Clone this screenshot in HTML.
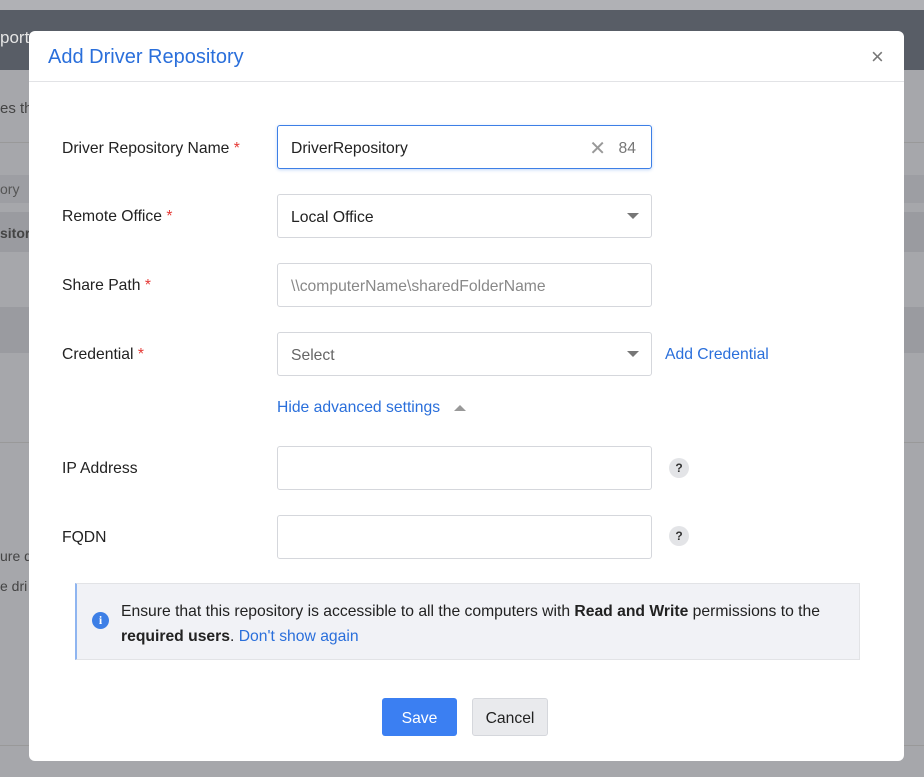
<!DOCTYPE html>
<html><head><meta charset="utf-8"><style>
*{box-sizing:border-box;margin:0;padding:0}
body{width:924px;height:777px;overflow:hidden;background:#a6a7ab;font-family:"Liberation Sans",sans-serif;position:relative;font-size:15.7px;color:#222}
.abs{position:absolute}
.modal{position:absolute;left:29px;top:31px;width:875px;height:730px;background:#fff;border-radius:6px}
.lbl{position:absolute;left:33px;font-size:15.7px;color:#222}
.req{color:#e53935}
.inp{position:absolute;left:248px;width:375px;height:44px;border:1px solid #d5d7dc;border-radius:3px;font-size:15.7px;padding:0 13px;line-height:46px;color:#222}
.caret{position:absolute;right:12px;top:18px;width:0;height:0;border-left:6px solid transparent;border-right:6px solid transparent;border-top:6px solid #777}
.q{position:absolute;left:640px;width:20px;height:20px;border-radius:50%;background:#e3e4e7;font-size:12px;font-weight:bold;text-align:center;line-height:20px;color:#333}
</style></head><body>
<div class="abs" style="left:0;top:0;width:924px;height:10px;background:#b0b1b5"></div>
<div class="abs" style="left:0;top:10px;width:924px;height:60px;background:#585d66"></div>
<div class="abs" style="left:0;top:28px;color:#e5e5e5;font-size:17px">port</div>
<div class="abs" style="left:0;top:100px;color:#444;font-size:15px">es th</div>
<div class="abs" style="left:0;top:142px;width:924px;height:1px;background:#999"></div>
<div class="abs" style="left:0;top:175px;width:924px;height:28px;background:#9d9ea3"></div>
<div class="abs" style="left:0;top:181px;color:#555;font-size:14px">ory</div>
<div class="abs" style="left:0;top:212px;width:924px;height:40px;background:#9a9ba0"></div>
<div class="abs" style="left:0;top:225px;color:#444;font-size:14px;font-weight:bold">sitor</div>
<div class="abs" style="left:0;top:307px;width:924px;height:46px;background:#9a9ba0"></div>
<div class="abs" style="left:0;top:442px;width:924px;height:1px;background:#999"></div>
<div class="abs" style="left:0;top:548px;color:#444;font-size:14px">ure d</div>
<div class="abs" style="left:0;top:578px;color:#444;font-size:14px">e dri</div>
<div class="abs" style="left:0;top:745px;width:924px;height:1px;background:#999"></div>
<div class="modal">
 <div class="abs" style="left:19px;top:15px;font-size:20px;color:#2a6fdb">Add Driver Repository</div>
 <div class="abs" style="left:842px;top:13px;font-size:22px;color:#777">×</div>
 <div class="abs" style="left:0;top:50px;width:875px;height:1px;background:#e2e3e6"></div>
 <div class="lbl" style="top:109px">Driver Repository Name <span class="req">*</span></div>
 <div class="inp" style="top:94px;border-color:#3d7fe6;box-shadow:0 1px 3px rgba(61,127,230,.3)">DriverRepository<span style="position:absolute;right:15px;color:#777">84</span><span style="position:absolute;right:45px;color:#999;font-size:20px">✕</span></div>
 <div class="lbl" style="top:177px">Remote Office <span class="req">*</span></div>
 <div class="inp" style="top:163px">Local Office<div class="caret"></div></div>
 <div class="lbl" style="top:246px">Share Path <span class="req">*</span></div>
 <div class="inp" style="top:232px;color:#888">\\computerName\sharedFolderName</div>
 <div class="lbl" style="top:315px">Credential <span class="req">*</span></div>
 <div class="inp" style="top:301px;color:#666">Select<div class="caret"></div></div>
 <div class="abs" style="left:636px;top:315px;color:#2a6fdb">Add Credential</div>
 <div class="abs" style="left:248px;top:368px;color:#2a6fdb">Hide advanced settings <span style="display:inline-block;margin-left:10px;border-left:6px solid transparent;border-right:6px solid transparent;border-bottom:6px solid #999;vertical-align:middle"></span></div>
 <div class="lbl" style="top:429px">IP Address</div>
 <div class="inp" style="top:415px"></div>
 <div class="q" style="top:427px">?</div>
 <div class="lbl" style="top:498px">FQDN</div>
 <div class="inp" style="top:484px"></div>
 <div class="q" style="top:495px">?</div>
 <div class="abs" style="left:46px;top:552px;width:785px;height:77px;background:#f1f2f6;border:1px solid #e2e3e6;border-left:2px solid #8fb5f0">
  <div class="abs" style="left:15px;top:28px;width:17px;height:17px;border-radius:50%;background:#3d7fe6;color:#fff;font-size:12px;font-weight:bold;text-align:center;line-height:17px;font-family:'Liberation Serif',serif">i</div>
  <div class="abs" style="left:44px;top:15px;font-size:15.7px;line-height:25px;width:740px">Ensure that this repository is accessible to all the computers with <b>Read and Write</b> permissions to the <b>required users</b>. <span style="color:#2a6fdb">Don't show again</span></div>
 </div>
 <div class="abs" style="left:353px;top:667px;width:75px;height:38px;background:#3b7ff2;border-radius:3px;color:#fff;text-align:center;line-height:42px">Save</div>
 <div class="abs" style="left:443px;top:667px;width:76px;height:38px;background:#e9eaed;border:1px solid #d5d7dc;border-radius:3px;text-align:center;line-height:40px">Cancel</div>
</div>
</body></html>
